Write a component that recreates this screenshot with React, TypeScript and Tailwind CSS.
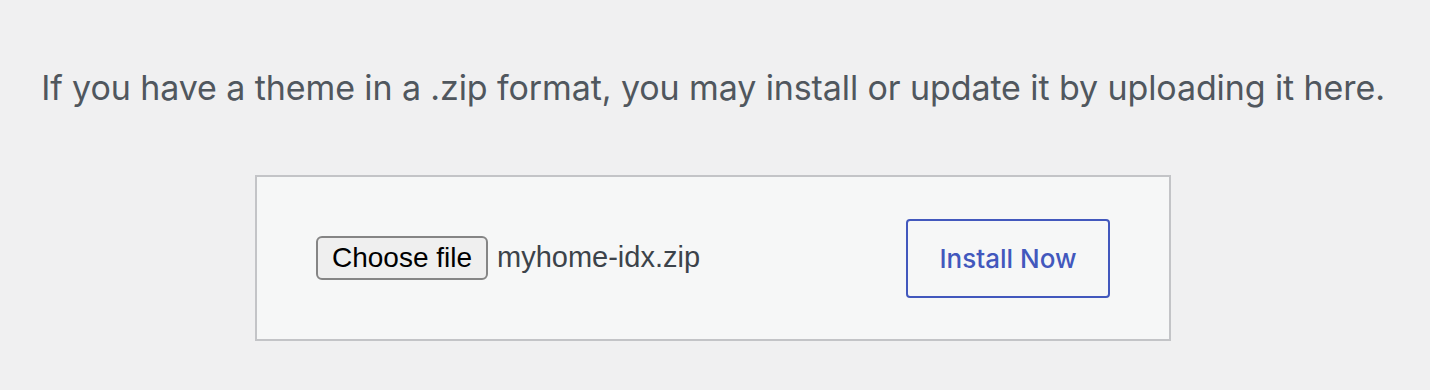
export default function App() {
  return (
    <div
      className="w-[1430px] h-[390px] bg-[#f0f0f1] flex flex-col items-center"
      style={{ fontFamily: 'Inter, "Noto Sans", sans-serif' }}
    >
      <p className="mt-[66px] text-[34px] leading-[44px] text-[#50575e] tracking-[-0.1px] pr-[4px]">
        If you have a theme in a .zip format, you may install or update it by uploading it here.
      </p>
      <div className="mt-[65px] w-[916px] h-[166px] border-2 border-[#c3c4c7] bg-[#f6f7f7] flex items-center justify-between pl-[59px] pr-[59px] -translate-x-[2px]">
        <div className="flex items-center gap-[9px]">
          <div className="h-[44px] w-[172px] flex items-center justify-center border-2 border-[#858585] rounded-[6px] bg-[#efefef] text-[28px] text-black" style={{ fontFamily: 'Arimo, "Liberation Sans", sans-serif' }}>
            Choose file
          </div>
          <span className="text-[29px] text-[#3c434a]" style={{ fontFamily: '"Liberation Sans", sans-serif' }}>myhome-idx.zip</span>
        </div>
        <button className="w-[204px] h-[79px] border-2 border-[#4258bd] rounded-[4px] text-[26px] font-medium text-[#4258bd] bg-[#f6f7f7]">
          Install Now
        </button>
      </div>
    </div>
  );
}
